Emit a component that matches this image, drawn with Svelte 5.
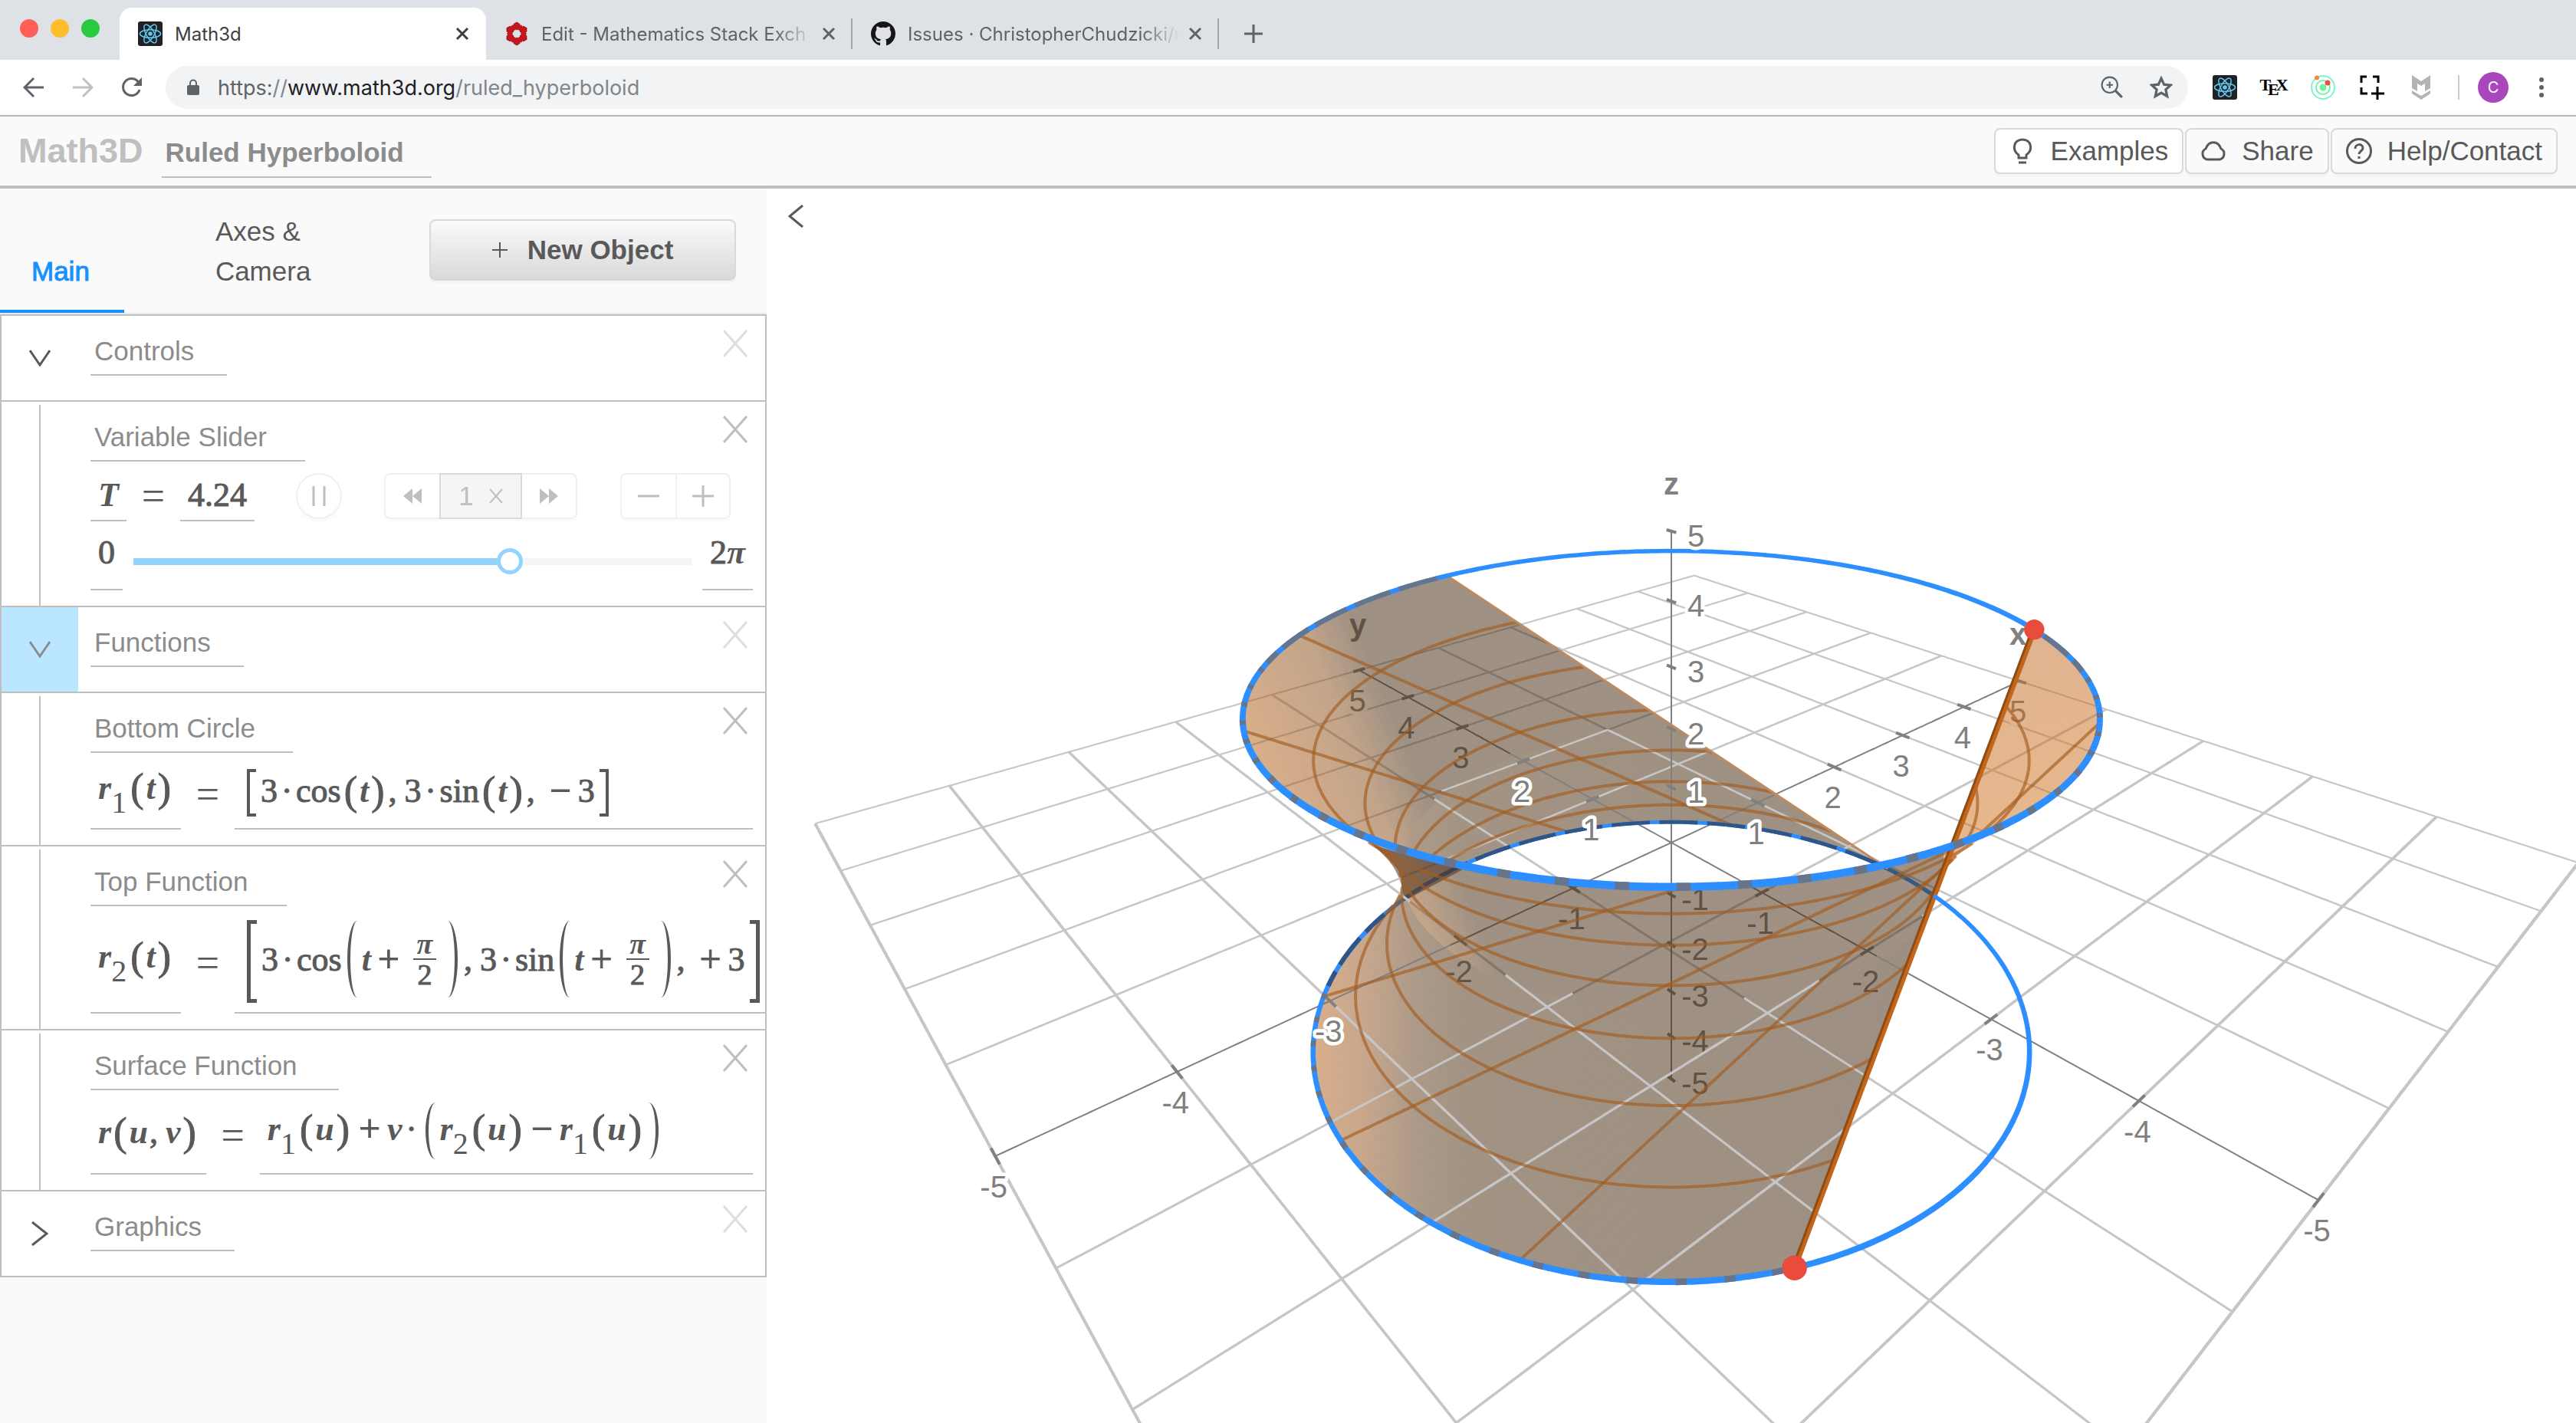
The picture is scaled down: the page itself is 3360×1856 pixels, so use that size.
<script lang="ts">
	type Point = [number, number, number];

	const T = 4.24;
	const RADIUS = 3;
	const MESH = 7;

	let value = $state(T);
	let url = $state('https://www.math3d.org/ruled_hyperboloid');

	// the camera sits where all three projection rows vanish
	const camera: Point = [-5.33, -5.81, 9.25];

	function project([x, y, z]: Point) {
		const w = 1 + 0.06404 * x + 0.0698 * y - 0.0274 * z;
		return {
			x: 2180 + (119.9 * x - 109.9 * y) / w,
			y: 1099 - (55.6 * x + 60.7 * y + 70.1 * z) / w,
			w
		};
	}

	function ring(angle: number, z: number): Point {
		return [RADIUS * Math.cos(angle), RADIUS * Math.sin(angle), z];
	}

	function surface(u: number, v: number): Point {
		const a = ring(u, -3);
		const b = ring(u + Math.PI / 2, 3);
		return [a[0] + v * (b[0] - a[0]), a[1] + v * (b[1] - a[1]), a[2] + v * (b[2] - a[2])];
	}

	// true when the ruled surface lies between the point and the camera
	function occluded(p: Point) {
		const d = camera.map((c, i) => c - p[i]);
		const a = d[0] ** 2 + d[1] ** 2 - 0.5 * d[2] ** 2;
		const b = 2 * (p[0] * d[0] + p[1] * d[1] - 0.5 * p[2] * d[2]);
		const c = p[0] ** 2 + p[1] ** 2 - 0.5 * p[2] ** 2 - 4.5;
		const disc = b * b - 4 * a * c;
		if (disc < 0) return false;
		return [-1, 1].some((sign) => {
			const s = (-b + sign * Math.sqrt(disc)) / (2 * a);
			if (s < 0.012 || s > 1) return false;
			const [x, y, z] = p.map((q, i) => q + s * d[i]);
			if (Math.abs(z) > 3) return false;
			const v = (z + 3) / 6;
			const turn = 2 * Math.PI;
			const u = (Math.atan2(y, x) - Math.atan2(v, 1 - v) + 2 * turn) % turn;
			return u <= T;
		});
	}

	function fmt(p: Point) {
		const q = project(p);
		return `${q.x.toFixed(1)} ${q.y.toFixed(1)}`;
	}

	function trace(f: (t: number) => Point, steps: number) {
		const parts = { over: '', under: '', width: 2.8 / project(f(0.5)).w };
		let last = '';
		for (let i = 0; i < steps; i++) {
			const side = occluded(f((i + 0.5) / steps)) ? 'under' : 'over';
			if (side !== last) parts[side] += `M${fmt(f(i / steps))}`;
			parts[side] += `L${fmt(f((i + 1) / steps))}`;
			last = side;
		}
		return parts;
	}

	const units = [-5, -4, -3, -2, -1, 0, 1, 2, 3, 4, 5];
	const gridLines = units
		.filter((n) => n !== 0)
		.flatMap((n) => [
			trace((t) => [n, -5 + 10 * t, 0], 240),
			trace((t) => [-5 + 10 * t, n, 0], 240)
		]);
	const axes = [
		trace((t) => [-5 + 10 * t, 0, 0], 240),
		trace((t) => [0, -5 + 10 * t, 0], 240),
		trace((t) => [0, 0, -5 + 10 * t], 240)
	];
	const ticks = units
		.filter((n) => n !== 0)
		.flatMap((n) => [
			trace((t) => [n, (t - 0.5) * 0.16, 0], 1),
			trace((t) => [(t - 0.5) * 0.14, n, 0], 1),
			trace((t) => [0, -(t - 0.5) * 0.1, n], 1)
		]);

	const quads = [];
	for (let i = 0; i < 90; i++) {
		for (let j = 0; j < 20; j++) {
			const corner = (a: number, b: number) => surface((T * (i + a)) / 90, (j + b) / 20);
			quads.push({
				d: `M${fmt(corner(0, 0))}L${fmt(corner(1, 0))}L${fmt(corner(1, 1))}L${fmt(corner(0, 1))}Z`,
				w: project(corner(0.5, 0.5)).w,
				top: j >= 10
			});
		}
	}
	quads.sort((a, b) => b.w - a.w);

	const mesh = [];
	for (let i = 1; i < MESH; i++) {
		mesh.push(trace((t) => surface((T * i) / MESH, t), 120).over);
		mesh.push(trace((t) => surface(T * t, i / MESH), 240).over);
	}

	function circle(z: number, start: number) {
		const pieces = [];
		for (let i = 0; i < 180; i++) {
			const angle = (i * Math.PI) / 90;
			const mid = ring(angle + Math.PI / 180, z);
			const u = (angle - start + 2 * Math.PI) % (2 * Math.PI);
			const far = mid[0] + mid[1] > 0;
			pieces.push({
				d: `M${fmt(ring(angle, z))}L${fmt(ring(angle + Math.PI / 85, z))}`,
				mark: `M${fmt(ring(angle, z))}L${fmt(ring(angle + Math.PI / (far ? 88 : 130), z))}`,
				width: 6.6 / project(mid).w,
				hidden: occluded(mid),
				marked: u <= T && (far ? i % 5 !== 0 : i % 3 === 0),
				navy: far && z < 0
			});
		}
		return pieces;
	}
	const rings = [...circle(-3, 0), ...circle(3, Math.PI / 2)];

	const behind = ['x5', 'x-1', 'x-2', 'y5', 'y4', 'y3', 'y-1', 'y-2'];
	const labels = units
		.filter((n) => n !== 0)
		.flatMap((n) => {
			const x = project([n, 0, 0]);
			const y = project([0, n, 0]);
			const z = project([0, 0, n]);
			return [
				{ id: `x${n}`, n, x: x.x - 2, y: x.y + 54, under: behind.includes(`x${n}`) },
				{ id: `y${n}`, n, x: y.x - 2, y: y.y + 54, under: behind.includes(`y${n}`) },
				{ id: `z${n}`, n, x: z.x + (n < 0 ? 31 : 32), y: z.y + 20, under: n < 0 }
			];
		});

	const dots = [
		{ ...project(surface(T, 0)), r: 16 },
		{ ...project(surface(T, 1)), r: 13 }
	];
	const edge = `M${fmt(surface(T, 0))}L${fmt(surface(T, 1))}`;
	const rim = `M${fmt(surface(0, 0))}L${fmt(surface(0, 1))}`;
</script>

{#snippet reactLogo()}
	<svg class="react" viewBox="0 0 32 32" aria-hidden="true">
		<rect width="32" height="32" rx="3" fill="#202124" />
		<g fill="none" stroke="#61c8f2" stroke-width="1.5">
			<ellipse cx="16" cy="16" rx="13.500" ry="5.200" />
			<ellipse cx="16" cy="16" rx="13.500" ry="5.200" transform="rotate(60 16 16)" />
			<ellipse cx="16" cy="16" rx="13.500" ry="5.200" transform="rotate(120 16 16)" />
		</g>
		<circle cx="16" cy="16" r="2.800" fill="#61c8f2" />
	</svg>
{/snippet}

{#snippet cross(label: string)}
	<button class="tab-close" aria-label={label}>
		<svg viewBox="0 0 18 18"><path d="M2 2 16 16M16 2 2 16" /></svg>
	</button>
{/snippet}

{#snippet title(text: string, width: number, faded: boolean)}
	<div class="title-row">
		<input class="title" value={text} aria-label="Description of {text}" style:width="{width}px" />
		<button class="remove" class:faded aria-label="Remove {text}">
			<svg viewBox="0 0 32 36"><path d="M1 1 31 35M31 1 1 35" /></svg>
		</button>
	</div>
{/snippet}

{#snippet folder(text: string, width: number, open: boolean, active: boolean)}
	<section class="item folder">
		<button class="gutter" class:active aria-label="Toggle {text}">
			{#if open}
				<svg width="28" height="22" viewBox="0 0 28 22"><path d="M1 1 14 20 27 1" /></svg>
			{:else}
				<svg width="22" height="32" viewBox="0 0 22 32"><path d="M1 1 20 16 1 31" /></svg>
			{/if}
		</button>
		<div class="body">{@render title(text, width, true)}</div>
	</section>
{/snippet}

{#snippet call(index: string, arg: string)}
	<i>r</i><sub>{index}</sub><span class="paren">(</span><i>{arg}</i><span class="paren">)</span>
{/snippet}

{#snippet shifted(name: string)}
	<span class="fn">{name}</span><span class="tall left"></span><i>t</i><span class="op">+</span><span
		class="frac"><i>π</i><span>2</span></span
	><span class="tall right"></span>
{/snippet}

<div class="window">
	<header class="tabs">
		<div class="lights">
			<span class="red"></span><span class="yellow"></span><span class="green"></span>
		</div>
		<div class="tab current">
			{@render reactLogo()}
			<span class="name">Math3d</span>
			{@render cross('Close Math3d')}
		</div>
		<div class="tab">
			<svg class="favicon" viewBox="0 0 32 32" aria-hidden="true">
				<g fill="#c5161d" stroke="#86090e" stroke-width="0.800">
					{#each [0, 60, 120, 180, 240, 300] as turn}
						<path d="M16 1 20 3.500V8.500L16 11 12 8.500V3.500Z" transform="rotate({turn} 16 16)" />
					{/each}
				</g>
				<g fill="#c5161d">
					{#each [30, 90, 150, 210, 270, 330] as turn}
						<path d="M16 3 19 5V9L16 11 13 9V5Z" transform="rotate({turn} 16 16)" />
					{/each}
				</g>
			</svg>
			<span class="name fade">Edit - Mathematics Stack Exch</span>
			{@render cross('Close Edit')}
		</div>
		<div class="tab">
			<svg class="favicon" viewBox="0 0 16 16" aria-hidden="true">
				<path
					fill="#161614"
					d="M8 0C3.58 0 0 3.58 0 8c0 3.54 2.29 6.53 5.47 7.59.4.07.55-.17.55-.38 0-.19-.01-.82-.01-1.49-2.01.37-2.53-.49-2.69-.94-.09-.23-.48-.94-.82-1.13-.28-.15-.68-.52-.01-.53.63-.01 1.08.58 1.23.82.72 1.21 1.87.87 2.33.66.07-.52.28-.87.51-1.07-1.78-.2-3.64-.89-3.64-3.95 0-.87.31-1.59.82-2.15-.08-.2-.36-1.02.08-2.12 0 0 .67-.21 2.2.82.64-.18 1.32-.27 2-.27.68 0 1.36.09 2 .27 1.53-1.04 2.2-.82 2.2-.82.44 1.1.16 1.92.08 2.12.51.56.82 1.27.82 2.15 0 3.07-1.87 3.75-3.65 3.95.29.25.54.73.54 1.48 0 1.07-.01 1.93-.01 2.2 0 .21.15.46.55.38A8.013 8.013 0 0016 8c0-4.42-3.58-8-8-8z"
				/>
			</svg>
			<span class="name fade">Issues · ChristopherChudzicki/r</span>
			{@render cross('Close Issues')}
		</div>
		<button class="new-tab" aria-label="New tab">
			<svg viewBox="0 0 24 24"><path d="M12 0V24M0 12H24" /></svg>
		</button>
	</header>

	<nav class="toolbar">
		<button aria-label="Back">
			<svg viewBox="0 0 28 28"><path d="M27 14H3M14 2 2 14 14 26" /></svg>
		</button>
		<button class="disabled" aria-label="Forward">
			<svg viewBox="0 0 28 28"><path d="M1 14H25M14 2 26 14 14 26" /></svg>
		</button>
		<button aria-label="Reload">
			<svg viewBox="0 0 28 28">
				<path d="M24 17A11 11 0 1 1 22 6.500" />
				<path d="M27 1V12H16Z" fill="currentColor" stroke="none" />
			</svg>
		</button>
		<div class="omnibox">
			<svg class="lock" viewBox="0 0 16 22" aria-hidden="true">
				<path d="M4 9V5.500a4 4 0 0 1 8 0V9" fill="none" stroke="#5f6368" stroke-width="2" />
				<rect y="8" width="16" height="13" rx="2" fill="#5f6368" />
			</svg>
			<a class="url" href={url}>https:<span>//</span><b>www.math3d.org</b><span>/ruled_hyperboloid</span></a>
			<button aria-label="Zoom">
				<svg viewBox="0 0 28 28">
					<circle cx="11" cy="11" r="9.500" stroke-width="2" />
					<path d="M18 18 26 26" />
					<path class="thin" d="M11 7V15M7 11H15" />
				</svg>
			</button>
			<button aria-label="Bookmark">
				<svg viewBox="0 0 28 28">
					<path d="M14 3 17.400 10.400 25.500 11.300 19.500 16.700 21.200 24.700 14 20.600 6.800 24.700 8.500 16.700 2.500 11.300 10.600 10.400Z" />
				</svg>
			</button>
		</div>
		<div class="extensions">
			{@render reactLogo()}
			<span class="tex">T<span>E</span>X</span>
			<svg viewBox="0 0 32 32" aria-hidden="true">
				<g fill="none" stroke="#6ff2b0" stroke-width="2">
					<circle cx="16" cy="16" r="15" stroke="#82f0d4" />
					<circle cx="16" cy="16" r="9" />
				</g>
				<circle cx="16" cy="16" r="4.500" fill="#6df29b" />
				<circle cx="8" cy="3.500" r="3" fill="#f58a3c" />
				<circle cx="22" cy="10" r="3.500" fill="#ef4a3b" />
			</svg>
			<svg viewBox="0 0 32 32" fill="none" stroke="#000" stroke-width="3" aria-hidden="true">
				<path d="M2 10V2H9M17 2H24V10M2 16V24H10M23 15V32M15 24H32" />
			</svg>
			<svg viewBox="0 0 32 32" fill="#b3b3b3" aria-hidden="true">
				<path d="M4 0 16 8 28 0V17L21 21V11L16 14 11 11V21L4 17Z" />
				<path d="M4 20 16 27 28 20V24L16 32 4 24Z" />
			</svg>
			<span class="divider"></span>
			<button class="avatar">C</button>
			<button class="more" aria-label="Menu">
				<svg viewBox="0 0 6 26"><circle cx="3" cy="3" r="3" /><circle cx="3" cy="13" r="3" /><circle cx="3" cy="23" r="3" /></svg>
			</button>
		</div>
	</nav>

	<div class="app-bar">
		<a class="brand" href="/">Math3D</a>
		<input class="scene-title" value="Ruled Hyperboloid" aria-label="Scene title" />
		<div class="actions">
			<button class="white">
				<svg viewBox="0 0 34 34">
					<path d="M12 26V22C3 16 5 2 17 2S31 16 22 22V26ZM12 32H22" />
				</svg>
				Examples
			</button>
			<button>
				<svg viewBox="0 0 34 34">
					<path d="M9 28A7.500 7.500 0 0 1 7 14C11 3 23 3 27 14A7.500 7.500 0 0 1 25 28Z" />
				</svg>
				Share
			</button>
			<button>
				<svg viewBox="0 0 34 34">
					<circle cx="17" cy="17" r="15.500" />
					<path d="M12 14C12 7 22 7 22 13 22 17 17 17 17 21M17 24V27" />
				</svg>
				Help/Contact
			</button>
		</div>
	</div>

	<main>
		<aside>
			<div class="panel-head">
				<a class="panel-tab selected" href="#main">Main</a>
				<a class="panel-tab" href="#axes">Axes &amp;<br />Camera</a>
				<button class="new-object">
					<svg viewBox="0 0 20 20"><path d="M10 0V20M0 10H20" /></svg>
					New Object
				</button>
			</div>

			<div class="items">
				{@render folder('Controls', 178, true, false)}

				<section class="item">
					<div class="gutter"><span class="fold"></span></div>
					<div class="body">
						{@render title('Variable Slider', 280, false)}
						<div class="row variable">
							<div class="field"><i>T</i></div>
							<span class="equals">=</span>
							<div class="field number">4.24</div>
							<button class="pause" aria-label="Pause">
								<svg viewBox="0 0 18 26"><path d="M2 0V26M16 0V26" /></svg>
							</button>
							<div class="group speed">
								<button aria-label="Slower">
									<svg viewBox="0 0 24 20"><path d="M12 0V20L0 10ZM24 0V20L12 10Z" /></svg>
								</button>
								<output>1 <svg viewBox="0 0 18 20"><path d="M1 1 17 19M17 1 1 19" /></svg></output>
								<button aria-label="Faster">
									<svg viewBox="0 0 24 20"><path d="M0 0V20L12 10ZM12 0V20L24 10Z" /></svg>
								</button>
							</div>
							<div class="group step">
								<button aria-label="Step down">
									<svg viewBox="0 0 28 28"><path d="M0 14H28" /></svg>
								</button>
								<button aria-label="Step up">
									<svg viewBox="0 0 28 28"><path d="M0 14H28M14 0V28" /></svg>
								</button>
							</div>
						</div>
						<div class="row range">
							<div class="field">0</div>
							<input type="range" min="0" max="6.283" step="0.01" bind:value aria-label="T" />
							<div class="field">2<i>π</i></div>
						</div>
					</div>
				</section>

				{@render folder('Functions', 200, true, true)}

				<section class="item">
					<div class="gutter"><span class="fold"></span></div>
					<div class="body">
						{@render title('Bottom Circle', 264, false)}
						<div class="row bottom-circle">
							<div class="field lhs raised">{@render call('1', 't')}</div>
							<span class="equals">=</span>
							<div class="field grow">
								<span class="bracket left"></span>3<span class="dot">·</span><span class="fn">cos</span><span class="paren">(</span><i>t</i><span class="paren">)</span><span class="comma">,</span>3<span class="dot">·</span><span class="fn">sin</span><span class="paren">(</span><i>t</i><span class="paren">)</span><span class="comma">,</span><span class="op">−</span>3<span class="bracket right"></span>
							</div>
						</div>
					</div>
				</section>

				<section class="item">
					<div class="gutter"><span class="fold"></span></div>
					<div class="body">
						{@render title('Top Function', 256, false)}
						<div class="row top-function">
							<div class="field lhs raised">{@render call('2', 't')}</div>
							<span class="equals">=</span>
							<div class="field grow">
								<span class="bracket left"></span>3<span class="dot">·</span>{@render shifted('cos')}<span class="comma">,</span>3<span class="dot">·</span>{@render shifted('sin')}<span class="comma">,</span><span class="op">+</span>3<span class="bracket right"></span>
							</div>
						</div>
					</div>
				</section>

				<section class="item">
					<div class="gutter"><span class="fold"></span></div>
					<div class="body">
						{@render title('Surface Function', 324, false)}
						<div class="row surface-function">
							<div class="field lhs">
								<i>r</i><span class="paren">(</span><i>u</i><span class="comma">,</span><i>v</i><span class="paren">)</span>
							</div>
							<span class="equals">=</span>
							<div class="field grow raised">
								{@render call('1', 'u')}<span class="op">+</span><i>v</i><span class="dot">·</span><span class="tall left"></span>{@render call('2', 'u')}<span class="op">−</span>{@render call('1', 'u')}<span class="tall right"></span>
							</div>
						</div>
					</div>
				</section>

				{@render folder('Graphics', 188, false, false)}
			</div>
		</aside>

		<div class="scene">
			<button class="collapse" aria-label="Collapse panel">
				<svg viewBox="0 0 20 30"><path d="M19 1 2 15 19 29" /></svg>
			</button>
			<svg class="plot" viewBox="1000 246 2360 1610" preserveAspectRatio="xMidYMid slice" role="img" aria-label="Ruled hyperboloid">
				<defs>
					<linearGradient id="upper" gradientUnits="userSpaceOnUse" x1="1650" y1="1080" x2="1845" y2="1000">
						<stop offset="0" stop-color="#bf6419" />
						<stop offset="0.700" stop-color="#854b16" />
						<stop offset="1" stop-color="#402408" />
					</linearGradient>
					<linearGradient id="lower" gradientUnits="userSpaceOnUse" x1="1715" y1="0" x2="2600" y2="0">
						<stop offset="0" stop-color="#b2601a" />
						<stop offset="0.080" stop-color="#8c4e1c" />
						<stop offset="0.145" stop-color="#5e3813" />
						<stop offset="0.220" stop-color="#47290a" />
						<stop offset="1" stop-color="#3a2005" />
					</linearGradient>
					<linearGradient id="flap" gradientUnits="userSpaceOnUse" x1="2600" y1="820" x2="2660" y2="1100">
						<stop offset="0" stop-color="#bf6a24" />
						<stop offset="1" stop-color="#d2741d" />
					</linearGradient>
					<clipPath id="right-side"><path d="M2535 700H2800V1200H2535Z" /></clipPath>
				</defs>

				<g class="grid">
					{#each gridLines as line}<path d={line.under} stroke-width={line.width} />{/each}
				</g>
				<g class="axis">
					{#each axes as line}<path d={line.under} />{/each}
				</g>
				<g class="tick">
					{#each ticks as line}<path d={line.under} />{/each}
				</g>
				<g class="curve">
					{#each rings.filter((r) => r.hidden) as piece}
						<path d={piece.d} stroke-width={piece.width} />
					{/each}
				</g>
				<g class="label">
					{#each labels.filter((l) => l.under) as label (label.id)}
						<text x={label.x} y={label.y}>{label.n}</text>
					{/each}
					<text class="name" x="1771" y="829">y</text>
					<text class="name" x="2632" y="841">x</text>
				</g>
				{#each dots as dot}
					<circle cx={dot.x} cy={dot.y} r={dot.r} fill="#e94b3c" />
				{/each}

				<g opacity="0.500">
					{#each quads as quad}
						<path class="quad" d={quad.d} fill="url(#{quad.top ? 'upper' : 'lower'})" stroke="url(#{quad.top ? 'upper' : 'lower'})" />
					{/each}
					<g clip-path="url(#right-side)">
						{#each quads.filter((q) => q.top) as quad}
							<path class="quad" d={quad.d} fill="url(#flap)" stroke="url(#flap)" />
						{/each}
					</g>
				</g>
				<path class="neck" d="M1790 1102C1830 1114 1870 1125 1908 1134L1832 1175C1829 1147 1818 1123 1790 1102Z" />

				<g class="grid">
					{#each gridLines as line}<path d={line.over} stroke-width={line.width} />{/each}
				</g>
				<g class="axis">
					{#each axes as line}<path d={line.over} />{/each}
				</g>
				<g class="tick">
					{#each ticks as line}<path d={line.over} />{/each}
				</g>
				<g class="mesh">
					{#each mesh as d}<path {d} />{/each}
				</g>
				<path class="rim" d={rim} />
				<path class="edge" d={edge} />
				<path class="edge shade" d={edge} transform="translate(-3 0)" />
				<g class="curve">
					{#each rings.filter((r) => !r.hidden) as piece}
						<path d={piece.d} stroke-width={piece.width} />
						{#if piece.marked}
							<path class="mark" class:navy={piece.navy} d={piece.mark} stroke-width={piece.width} />
						{/if}
					{/each}
				</g>
				{#each dots as dot}
					<circle cx={dot.x} cy={dot.y} r={dot.r} fill="#e94b3c" />
				{/each}
				<g class="label">
					{#each labels.filter((l) => !l.under) as label (label.id)}
						<text x={label.x} y={label.y}>{label.n}</text>
					{/each}
					<text class="name" x="2180" y="645">z</text>
				</g>
			</svg>
		</div>
	</main>
</div>

<style>
	:global(body) {
		margin: 0;
		background: #fff;
	}

	.window {
		display: flex;
		flex-direction: column;
		height: 100vh;
		overflow: hidden;
		font-family: 'Liberation Sans', Arial, sans-serif;
		font-size: 35px;
		color: #595959;
	}

	button,
	input,
	a {
		font: inherit;
		color: inherit;
		text-decoration: none;
	}

	button {
		display: flex;
		align-items: center;
		justify-content: center;
		box-sizing: border-box;
		padding: 0;
		border: none;
		background: none;
	}

	button svg {
		fill: none;
		stroke: currentColor;
		stroke-width: 3px;
	}

	.thin {
		stroke-width: 2px;
	}

	/* browser chrome */
	.tabs {
		display: flex;
		align-items: flex-end;
		height: 78px;
		flex: none;
		background: #dee1e6;
		font-family: Inter, sans-serif;
		font-size: 24px;
		color: #5f6368;
	}

	.lights {
		display: flex;
		gap: 16px;
		align-self: center;
		padding: 0 26px 4px;
	}

	.lights span {
		width: 24px;
		height: 24px;
		border-radius: 50%;
	}

	.red {
		background: #ff5f57;
	}

	.yellow {
		background: #ffbd2e;
	}

	.green {
		background: #28ca42;
	}

	.tab {
		display: flex;
		align-items: center;
		box-sizing: border-box;
		width: 478px;
		height: 68px;
		padding: 0 22px 0 24px;
		position: relative;
	}

	.tab:not(.current)::after {
		content: '';
		position: absolute;
		right: 0;
		top: 14px;
		height: 40px;
		border-right: 2px solid #a3a7ab;
	}

	.tab.current {
		background: #fff;
		border-radius: 16px 16px 0 0;
		color: #3c4043;
	}

	.favicon,
	.react {
		width: 32px;
		height: 32px;
		flex: none;
	}

	.name {
		flex: 1;
		margin: 0 0 0 16px;
		white-space: nowrap;
	}

	.name.fade {
		mask-image: linear-gradient(to right, #000 83%, transparent 97%);
	}

	.tab-close svg {
		width: 18px;
		height: 18px;
	}

	.new-tab {
		width: 90px;
		height: 68px;
	}

	.new-tab svg {
		width: 24px;
	}

	.toolbar {
		display: flex;
		align-items: center;
		flex: none;
		box-sizing: border-box;
		height: 74px;
		padding: 0 34px 0 30px;
		border-bottom: 2px solid #b6b8ba;
		color: #5f6368;
	}

	.toolbar > button {
		width: 28px;
		margin-right: 36px;
	}

	.toolbar > .disabled {
		color: #bdc1c6;
	}

	.omnibox {
		display: flex;
		align-items: center;
		flex: 1;
		gap: 34px;
		height: 56px;
		margin-left: -6px;
		padding: 0 20px 0 28px;
		border-radius: 28px;
		background: #f1f3f4;
	}

	.omnibox button,
	.omnibox button svg {
		width: 30px;
	}

	.lock {
		width: 16px;
	}

	.url {
		flex: 1;
		margin-left: -10px;
		font-family: Inter, sans-serif;
		font-size: 27px;
	}

	.url span {
		color: #80868b;
	}

	.url b {
		font-weight: 400;
		color: #202124;
	}

	.extensions {
		display: flex;
		align-items: center;
		gap: 32px;
		padding-left: 32px;
	}

	.extensions > svg {
		width: 32px;
		height: 32px;
	}

	.tex {
		width: 32px;
		display: flex;
		justify-content: center;
		font: bold 22px 'Liberation Serif', serif;
		color: #000;
	}

	.tex span {
		margin: 6px -4px 0;
	}

	.divider {
		height: 32px;
		border-right: 2px solid #c8cacc;
	}

	.avatar {
		width: 40px;
		height: 40px;
		margin-left: -8px;
		border-radius: 50%;
		background: #ab47bc;
		color: #fff;
		font-family: Inter, sans-serif;
		font-size: 20px;
	}

	.more {
		margin: 0 8px;
	}

	.more svg {
		width: 6px;
		fill: #5f6368;
		stroke: none;
	}

	/* application header */
	.app-bar {
		display: flex;
		align-items: center;
		flex: none;
		box-sizing: border-box;
		height: 94px;
		padding: 0 24px;
		border-bottom: 4px solid #bfbfbf;
		background: #fafafa;
	}

	.brand {
		font-size: 45px;
		font-weight: 700;
		color: #bfbfbf;
	}

	.scene-title {
		width: 352px;
		height: 60px;
		box-sizing: border-box;
		margin: 10px 0 0 24px;
		padding: 0 5px 4px;
		border: none;
		border-bottom: 2px solid #bfbfbf;
		background: none;
		font-weight: 700;
		color: #8c8c8c;
	}

	.actions {
		display: flex;
		gap: 2px;
		margin-left: auto;
	}

	.actions button {
		height: 60px;
		gap: 20px;
		padding: 0 18px;
		border: 2px solid #d9d9d9;
		border-radius: 8px;
		background: #fafafa;
		box-shadow: 0 4px 0 #00000005;
	}

	.actions .white {
		background: #fff;
	}

	.actions svg {
		width: 34px;
	}

	main {
		display: flex;
		flex: 1;
		min-height: 0;
	}

	aside {
		width: 1000px;
		flex: none;
		background: #fafafa;
	}

	.panel-head {
		display: flex;
		align-items: flex-end;
		box-sizing: border-box;
		height: 164px;
		padding-right: 40px;
		border-bottom: 2px solid #e8e8e8;
		line-height: 52px;
	}

	.panel-tab {
		padding: 0 45px 28px 41px;
	}

	.panel-tab.selected {
		margin-right: 78px;
		padding-bottom: 24px;
		border-bottom: 4px solid #1890ff;
		color: #1890ff;
		-webkit-text-stroke: 1px #1890ff;
	}

	.new-object {
		width: 400px;
		height: 80px;
		gap: 26px;
		margin: 0 0 42px auto;
		border: 2px solid #d9d9d9;
		border-radius: 8px;
		background: linear-gradient(#fafafa, #d9d9d9);
		box-shadow: 0 4px 0 #00000005;
		font-weight: 700;
	}

	.new-object svg {
		width: 20px;
		stroke-width: 2px;
	}

	.items {
		border: 2px solid #bfbfbf;
		border-bottom: none;
		background: #fff;
	}

	.item {
		display: flex;
		border-bottom: 2px solid #bfbfbf;
		overflow: hidden;
	}

	.gutter {
		width: 100px;
		flex: none;
		display: flex;
		justify-content: center;
	}

	.gutter svg {
		stroke-width: 3px;
	}

	.gutter.active {
		background: #bae7ff;
		color: #8c8c8c;
	}

	.fold {
		margin-top: 4px;
		border-left: 2px solid #bfbfbf;
	}

	.body {
		flex: 1;
		min-width: 0;
		padding: 20px 16px;
	}

	.folder .body {
		padding-bottom: 32px;
	}

	.title-row {
		display: flex;
		justify-content: space-between;
		align-items: flex-start;
		padding-right: 7px;
	}

	.title {
		height: 58px;
		box-sizing: border-box;
		padding: 0 5px 4px;
		border: none;
		border-bottom: 2px solid #bfbfbf;
		background: none;
		color: #8c8c8c;
	}

	.remove {
		margin-top: -2px;
		color: #bfbfbf;
	}

	.remove.faded {
		color: #dedede;
	}

	.remove svg {
		width: 32px;
	}

	/* formulas */
	.row {
		display: flex;
		align-items: stretch;
		font-family: 'Liberation Serif', serif;
		font-size: 44px;
	}

	.row i {
		font-weight: 700;
		-webkit-text-stroke: 0;
	}

	.field {
		display: flex;
		align-items: center;
		flex: none;
		box-sizing: border-box;
		padding: 0 10px;
		border-bottom: 2px solid #bfbfbf;
		white-space: pre;
		-webkit-text-stroke: 1px currentColor;
	}

	.field.raised {
		padding-bottom: 8px;
	}

	.field.grow {
		flex: 1 0 auto;
	}

	.equals {
		align-self: center;
		flex: none;
		width: 70px;
		padding-top: 8px;
		text-align: center;
		font-size: 54px;
		line-height: 44px;
	}

	.variable {
		height: 78px;
		align-items: center;
	}

	.variable .field {
		height: 60px;
		align-self: flex-end;
		padding-bottom: 8px;
	}

	.variable .equals {
		padding-top: 12px;
	}

	.pause {
		width: 60px;
		height: 60px;
		margin: 12px 0 0 54px;
		border: 2px solid #f0f0f0;
		border-radius: 50%;
		color: #bfbfbf;
		box-shadow: 0 4px 0 #00000004;
	}

	.pause svg {
		width: 18px;
	}

	.group {
		display: flex;
		height: 60px;
		box-sizing: border-box;
		margin-top: 12px;
		border: 2px solid #f0f0f0;
		border-radius: 8px;
		box-shadow: 0 4px 0 #00000004;
		color: #bfbfbf;
	}

	.speed {
		margin-left: 55px;
	}

	.group button {
		width: 70px;
	}

	.speed svg {
		width: 24px;
		fill: #bfbfbf;
		stroke: none;
	}

	.speed output {
		display: flex;
		align-items: center;
		justify-content: center;
		gap: 20px;
		width: 108px;
		margin: -2px 0;
		box-sizing: border-box;
		border: 2px solid #d9d9d9;
		background: #f5f5f5;
		font-family: 'Liberation Sans', Arial, sans-serif;
		font-size: 35px;
	}

	.speed output svg {
		width: 18px;
		fill: none;
		stroke: #bfbfbf;
		stroke-width: 2px;
	}

	.step {
		margin-left: auto;
		margin-right: 29px;
	}

	.step button + button {
		border-left: 2px solid #f0f0f0;
	}

	.step svg {
		width: 28px;
	}

	.range {
		height: 90px;
	}

	.range .field {
		padding-bottom: 8px;
	}

	.range input {
		flex: 1;
		appearance: none;
		align-self: center;
		height: 36px;
		margin: 14px -3px 0;
		background: none;
	}

	.range input::-webkit-slider-runnable-track {
		height: 36px;
		background: linear-gradient(to right, #91d5ff 67%, #f5f5f5 67%) no-repeat center / calc(100% - 34px) 9px;
	}

	.range input::-webkit-slider-thumb {
		appearance: none;
		box-sizing: border-box;
		width: 34px;
		height: 34px;
		margin-top: 1px;
		border: 5px solid #91d5ff;
		border-radius: 50%;
		background: #fff;
	}

	.bottom-circle {
		height: 100px;
	}

	.top-function {
		height: 140px;
	}

	.surface-function {
		height: 110px;
	}

	sub {
		align-self: center;
		margin-top: 40px;
		padding-right: 2px;
		font-size: 40px;
		line-height: 1;
		vertical-align: baseline;
		-webkit-text-stroke: 0;
	}

	.paren {
		padding: 0 3px;
		font-size: 52px;
	}

	.fn {
		padding-right: 1px;
	}

	.dot {
		width: 24px;
		text-align: center;
	}

	.comma {
		padding: 0 10px 0 2px;
	}

	.op {
		width: 46px;
		text-align: center;
		font-size: 50px;
	}

	.bracket {
		width: 8px;
		height: 54px;
		margin: 6px 6px 0;
		border: 4px solid #595959;
	}

	.bracket.left {
		border-right: none;
	}

	.bracket.right {
		border-left: none;
	}

	.top-function .bracket {
		height: 98px;
		border-width: 5px;
	}

	.tall {
		width: 13px;
		height: 100px;
		margin: 0 6px;
		box-sizing: border-box;
	}

	.surface-function .tall {
		height: 74px;
		margin-top: 6px;
	}

	.tall.left {
		border-left: 4px solid #595959;
		border-radius: 100% 0 0 100% / 50% 0 0 50%;
	}

	.tall.right {
		border-right: 4px solid #595959;
		border-radius: 0 100% 100% 0 / 0 50% 50% 0;
	}

	.frac {
		display: flex;
		flex-direction: column;
		align-items: center;
		width: 30px;
		margin: 0 9px;
		font-size: 38px;
		line-height: 38px;
	}

	.frac i {
		width: 30px;
		border-bottom: 2px solid #595959;
		text-align: center;
	}

	/* 3d scene */
	.scene {
		position: relative;
		flex: 1;
		min-width: 0;
	}

	.collapse {
		position: absolute;
		left: 28px;
		top: 21px;
	}

	.collapse svg {
		width: 20px;
	}

	.plot {
		display: block;
		width: 100%;
		height: 100%;
		fill: none;
	}

	.grid {
		stroke: #c6c6c6;
	}

	.axis {
		stroke: #808080;
		stroke-width: 2px;
	}

	.tick {
		stroke: #808080;
		stroke-width: 4px;
	}

	.curve {
		stroke: #2d8fff;
	}

	.curve .mark {
		stroke: #66758c;
	}

	.curve .navy {
		stroke: #2f5485;
	}

	.quad {
		stroke-width: 1px;
	}

	.neck {
		fill: #432814;
		fill-opacity: 0.5;
	}

	.mesh {
		stroke: #a35c1e;
		stroke-opacity: 0.65;
		stroke-width: 4px;
	}

	.rim {
		stroke: #c08a5c;
		stroke-width: 3px;
	}

	.edge {
		stroke: #c2661b;
		stroke-width: 7px;
	}

	.edge.shade {
		stroke: #8f4c12;
		stroke-width: 3px;
	}

	.label text {
		fill: #808080;
		stroke: #fff;
		stroke-width: 9px;
		stroke-linejoin: round;
		paint-order: stroke;
		font-size: 40px;
		text-anchor: middle;
	}

	.label .name {
		font-weight: 700;
	}
</style>
